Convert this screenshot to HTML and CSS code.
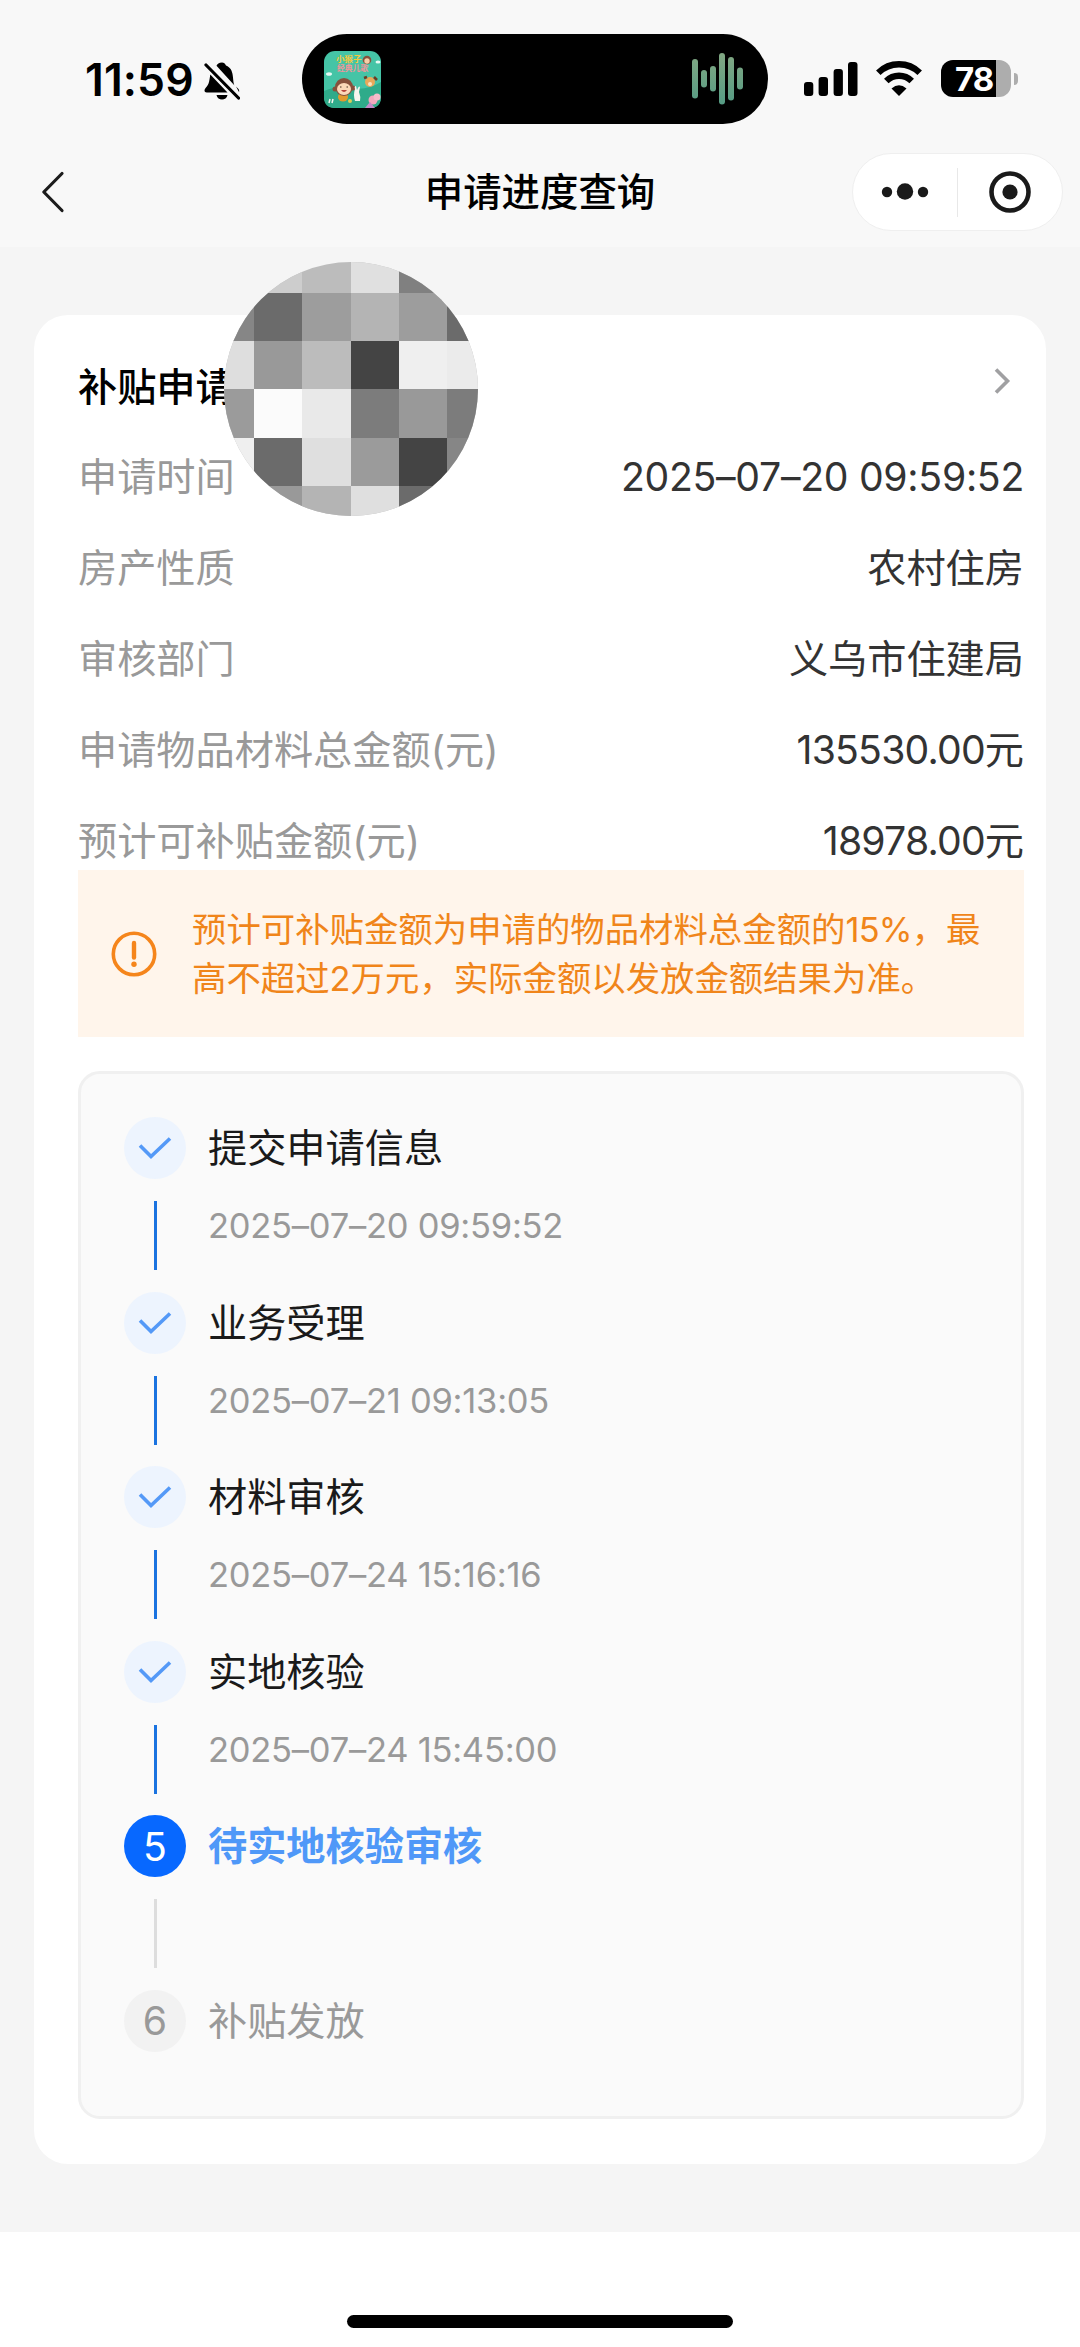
FILE: index.html
```html
<!DOCTYPE html>
<html lang="zh-CN">
<head>
<meta charset="utf-8">
<title>申请进度查询</title>
<link rel="stylesheet" href="styles.css">
</head>
<body>
<header class="top">
  <div class="status">
    <div class="clock">11:59</div>
    <svg class="bell" width="36" height="40" viewBox="0 0 36 40">
      <path d="M18 1.500c-3 0-4.700 1.600-5.500 3.200L30.500 24.500C28 19 31 8 22 4.500 21 2.500 20 1.500 18 1.500zM6.300 13.500L23.500 31.500H2.800C.2 31.500-.2 29 1.600 27 5.500 23.500 5.500 18 6.300 13.500zM12.500 34h11c-1 6-10 6-11 0zM32 25.500l2.500 2.600c.6.800.9 2 .5 3z"/>
      <path d="M2 4L34.500 37" fill="none" stroke="#000" stroke-width="3.200" stroke-linecap="round"/>
    </svg>
    <div class="island">
      <svg class="cover" width="57" height="57" viewBox="0 0 57 57">
        <rect width="57" height="57" rx="11" fill="#45c4a6"/>
        <path d="M0 40q14-6 28-3t29-6v15q0 11-11 11H11Q0 57 0 46z" fill="#2fab8a"/>
        <text x="12" y="11" class="cover-a">小猴子</text>
        <text x="13" y="20" class="cover-b">经典儿歌</text>
        <circle cx="43" cy="9" r="4.300" fill="#87513c"/><circle cx="43" cy="10" r="2.700" fill="#f5cfa8"/>
        <ellipse cx="5" cy="23" rx="3" ry="1.800" fill="#e6f8f3"/><ellipse cx="54" cy="11" rx="2.500" ry="1.600" fill="#e6f8f3"/>
        <ellipse cx="19" cy="46" rx="5" ry="4.500" fill="#e19a2d"/>
        <circle cx="11" cy="38" r="2.500" fill="#87513c"/><circle cx="29" cy="37" r="2.500" fill="#87513c"/>
        <circle cx="20" cy="36" r="9" fill="#87513c"/><ellipse cx="20" cy="38" rx="7" ry="6" fill="#fbd8b8"/>
        <path d="M17 39q3 4 6 0z" fill="#b7453c"/><path d="M16 36h1.500M22.500 36h1.500" stroke="#432" stroke-width="1.200"/>
        <path d="M31 38q-1-3 1-3l1 4q2-5 3-3l-1 5q2 5 1 9h-5q-2-6 0-12z" fill="#f6f4ee"/>
        <circle cx="46" cy="31" r="5" fill="#e9a85a"/><path d="M40 27l3-1M50 26l3 3" stroke="#6b3d24" stroke-width="2.500"/><circle cx="46" cy="33" r="2" fill="#fbe3c0"/>
        <circle cx="49" cy="49" r="4.500" fill="#f3a9bd"/><circle cx="53" cy="46" r="3.500" fill="#f6bccb"/><path d="M41 57l5-6 5 6z" fill="#c58bc9"/>
        <path d="M5 52l1-4M8 52l1-4" stroke="#f6f4ee" stroke-width="1.500"/><circle cx="26" cy="50" r="2" fill="#d9cf55"/>
      </svg>
      <svg class="wave" width="52" height="52" viewBox="0 0 52 52">
        <defs><linearGradient id="w" x1="0" y1="0" x2="0" y2="52" gradientUnits="userSpaceOnUse"><stop offset="0" stop-color="#82a883"/><stop offset="1" stop-color="#559b84"/></linearGradient></defs>
        <g fill="url(#w)"><rect x="0" y="6" width="6" height="39.500" rx="3"/><rect x="9" y="17" width="6" height="17.500" rx="3"/><rect x="18" y="13" width="6" height="25.500" rx="3"/><rect x="27" y="0" width="6" height="51.500" rx="3"/><rect x="36" y="4" width="6" height="43.500" rx="3"/><rect x="45" y="14.500" width="6" height="22" rx="3"/></g>
      </svg>
    </div>
    <svg class="signal" width="54" height="34" viewBox="0 0 54 34"><rect x="0" y="20" width="9.300" height="14" rx="3"/><rect x="14.600" y="15" width="9.400" height="19" rx="3"/><rect x="29.600" y="7" width="9.300" height="27" rx="3"/><rect x="44" y="0" width="9.500" height="34" rx="3"/></svg>
    <svg class="wifi" width="48" height="36" viewBox="0 0 48 36">
      <path d="M3.300 11.800a29.500 29.500 0 0 1 41.400 0M11.300 20a18 18 0 0 1 25.400 0" fill="none" stroke="#000" stroke-width="6.400"/>
      <path d="M16.500 27.500q7.500-6.500 15 0L24 35z"/>
    </svg>
    <div class="battery"><span class="charge">78</span></div>
    <div class="nub"></div>
  </div>
  <nav class="nav">
    <svg class="back" width="24" height="42" viewBox="0 0 24 42"><path d="M21 2.500L2.800 21 21 39.500" fill="none" stroke="#1c1c1c" stroke-width="3.200" stroke-linecap="round" stroke-linejoin="round"/></svg>
    <h1 class="title">申请进度查询</h1>
    <div class="capsule">
      <svg class="dots" width="48" height="18" viewBox="0 0 48 18"><circle cx="6" cy="9" r="5.200"/><circle cx="24" cy="8.500" r="8.200"/><circle cx="42" cy="9" r="5.200"/></svg>
      <i class="rule"></i>
      <svg class="target" width="42" height="42" viewBox="0 0 42 42"><circle cx="21" cy="21" r="18.500" fill="none" stroke="#1a1a1a" stroke-width="4.600"/><circle cx="21" cy="21" r="7.600"/></svg>
    </div>
  </nav>
</header>
<main class="page">
  <section class="card">
    <div class="head">
      <h2 class="name">补贴申请</h2>
      <svg class="more" width="18" height="28" viewBox="0 0 18 28"><path d="M3 2.500L14.500 14 3 25.500" fill="none" stroke="#a0a0a2" stroke-width="3.600"/></svg>
      <svg class="mosaic" width="254" height="254" viewBox="0 0 254 254" shape-rendering="crispEdges">
        <defs><clipPath id="c"><circle cx="127" cy="127" r="127"/></clipPath></defs>
        <g clip-path="url(#c)">
          <rect width="254" height="254" fill="#bcbcbc"/>
          <path fill="#cdcdcd" d="M0 0h78v31H0z"/><path fill="#e0e0e0" d="M127 0h48v31h-48z"/><path fill="#808080" d="M175 0h79v31h-79z"/>
          <path fill="#868686" d="M0 31h30v48H0z"/><path fill="#6b6b6b" d="M30 31h48v48H30z"/><path fill="#9d9d9d" d="M78 31h49v48H78z"/><path fill="#b4b4b4" d="M127 31h48v48h-48z"/><path fill="#9d9d9d" d="M175 31h48v48h-48z"/><path fill="#6b6b6b" d="M223 31h31v48h-31z"/>
          <path fill="#dedede" d="M0 79h30v48H0z"/><path fill="#999" d="M30 79h48v48H30z"/><path fill="#bcbcbc" d="M78 79h49v48H78z"/><path fill="#444" d="M127 79h48v48h-48z"/><path fill="#efefef" d="M175 79h48v48h-48z"/><path fill="#ebebeb" d="M223 79h31v48h-31z"/>
          <path fill="#9b9b9b" d="M0 127h30v49H0z"/><path fill="#fbfbfb" d="M30 127h48v49H30z"/><path fill="#e9e9e9" d="M78 127h49v49H78z"/><path fill="#7c7c7c" d="M127 127h48v49h-48z"/><path fill="#999" d="M175 127h48v49h-48z"/><path fill="#7c7c7c" d="M223 127h31v49h-31z"/>
          <path fill="#efefef" d="M0 176h30v48H0z"/><path fill="#6b6b6b" d="M30 176h48v48H30z"/><path fill="#dfdfdf" d="M78 176h49v48H78z"/><path fill="#9b9b9b" d="M127 176h48v48h-48z"/><path fill="#444" d="M175 176h48v48h-48z"/><path fill="#868686" d="M223 176h31v48h-31z"/>
          <path fill="#999" d="M0 224h78v30H0z"/><path fill="#b4b4b4" d="M78 224h49v30H78z"/><path fill="#dfdfdf" d="M127 224h48v30h-48z"/><path fill="#6b6b6b" d="M175 224h79v30h-79z"/>
        </g>
      </svg>
    </div>
    <dl class="info">
      <div class="row"><dt>申请时间</dt><dd class="date">2025–07–20 09:59:52</dd></div>
      <div class="row"><dt>房产性质</dt><dd>农村住房</dd></div>
      <div class="row"><dt>审核部门</dt><dd>义乌市住建局</dd></div>
      <div class="row"><dt>申请物品材料总金额(元)</dt><dd><span class="num">135530.00</span>元</dd></div>
      <div class="row"><dt>预计可补贴金额(元)</dt><dd><span class="num">18978.00</span>元</dd></div>
    </dl>
    <div class="notice">
      <svg class="warn" width="46" height="46" viewBox="0 0 46 46"><circle cx="23" cy="23" r="20.700" fill="none" stroke="#f5851b" stroke-width="3.600"/><path d="M23 12v14.500" stroke="#f5851b" stroke-width="4.400" stroke-linecap="round"/><circle cx="23" cy="33.200" r="2.700" fill="#f5851b"/></svg>
      <p class="tip">预计可补贴金额为申请的物品材料总金额的<span class="num">15%</span>，最<br>高不超过2万元，实际金额以发放金额结果为准。</p>
    </div>
    <ol class="steps">
      <li class="step"><span class="mark"><svg width="34" height="24" viewBox="0 0 34 24"><path d="M2 9.500l11 11L32 2.500" fill="none" stroke="#5499f7" stroke-width="3.600"/></svg></span><span class="label">提交申请信息</span><i class="line"></i><time class="when">2025–07–20 09:59:52</time></li>
      <li class="step"><span class="mark"><svg width="34" height="24" viewBox="0 0 34 24"><path d="M2 9.500l11 11L32 2.500" fill="none" stroke="#5499f7" stroke-width="3.600"/></svg></span><span class="label">业务受理</span><i class="line"></i><time class="when">2025–07–21 09:13:05</time></li>
      <li class="step"><span class="mark"><svg width="34" height="24" viewBox="0 0 34 24"><path d="M2 9.500l11 11L32 2.500" fill="none" stroke="#5499f7" stroke-width="3.600"/></svg></span><span class="label">材料审核</span><i class="line"></i><time class="when">2025–07–24 15:16:16</time></li>
      <li class="step"><span class="mark"><svg width="34" height="24" viewBox="0 0 34 24"><path d="M2 9.500l11 11L32 2.500" fill="none" stroke="#5499f7" stroke-width="3.600"/></svg></span><span class="label">实地核验</span><i class="line"></i><time class="when">2025–07–24 15:45:00</time></li>
      <li class="step current"><span class="mark">5</span><span class="label">待实地核验审核</span><i class="line"></i></li>
      <li class="step pending"><span class="mark">6</span><span class="label">补贴发放</span></li>
    </ol>
  </section>
</main>
<footer class="home"><div class="bar"></div></footer>
</body>
</html>
```
FILE: styles.css
```css
* { box-sizing: border-box; margin: 0; padding: 0; }
html { background: #fff; }
body {
  width: 1080px;
  height: 2347px;
  display: flex;
  flex-direction: column;
  overflow: hidden;
  font-family: Inter, "Noto Sans CJK SC", sans-serif;
  font-size: 39.2px;
  color: #333;
}
svg { display: block; flex: none; }

.top { height: 247px; flex: none; background: #f8f8f8; }
.status { height: 153px; padding: 34px 0 0 85px; display: flex; align-items: flex-start; }
.clock { width: 119px; height: 90px; line-height: 92px; font-size: 44.5px; font-weight: 600; color: #000; white-space: nowrap; letter-spacing: .1px; }
.bell { margin-top: 27px; }
.island {
  width: 466px; height: 90px; margin-left: 62px; padding: 0 24px 0 22px;
  display: flex; align-items: center; justify-content: space-between;
  border-radius: 45px; background: #000;
}
.cover-a { font-size: 8.5px; font-weight: 700; fill: #f4c93e; }
.cover-b { font-size: 7.8px; font-weight: 700; fill: #f0949a; }
.signal { margin: 28px 0 0 36px; }
.wifi { margin: 27px 0 0 17px; }
.battery {
  width: 70px; height: 37px; margin: 26px 0 0 18px; border-radius: 12px;
  background: linear-gradient(to right, #000 55px, #adadad 55px);
}
.charge { display: block; padding-left: 14px; line-height: 38px; font-size: 33px; font-weight: 700; color: #fff; letter-spacing: -1px; }
.nub { width: 4px; height: 12px; margin: 39px 0 0 3px; border-radius: 0 5px 5px 0; background: #adadad; }

.nav { height: 78px; padding: 0 17px 0 41px; display: grid; grid-template-columns: 211px 1fr 211px; align-items: center; }
.title { margin-left: -24px; text-align: center; font-size: 38.4px; line-height: 78px; font-weight: 500; color: #000; }
.capsule { height: 78px; display: flex; align-items: center; border: 1px solid #efefef; border-radius: 39px; background: #fff; }
.dots { margin-left: 28px; fill: #1a1a1a; }
.rule { width: 1px; height: 49px; margin-left: 28px; background: #e8e8e8; }
.target { margin-left: 31px; fill: #1a1a1a; }

.page { height: 1985px; flex: none; padding: 68px 34px 0; background: #f5f5f5; }
.card { height: 1849px; padding: 0 22px 0 44px; border-radius: 34px; background: #fff; }
.head { position: relative; height: 118px; display: flex; justify-content: space-between; }
.name { padding-top: 44px; font-size: 39.2px; line-height: 56px; font-weight: 500; color: #000; }
.more { margin: 52px 13px 0 0; }
.mosaic { position: absolute; left: 146px; top: -53px; }
.row { height: 91px; display: flex; justify-content: space-between; line-height: 88px; white-space: nowrap; }
.row dt { color: #999; }
.info { height: 437px; }
.date { letter-spacing: -.3px; }
.num { letter-spacing: -.8px; }

.notice { height: 167px; padding-left: 33px; display: flex; align-items: center; background: #fff5eb; color: #f0851a; }
.tip { margin-left: 35px; font-size: 34.4px; line-height: 49px; white-space: nowrap; }

.steps { height: 1048px; margin-top: 34px; padding: 43px 0 0 43px; list-style: none; border: 3px solid #f0f0f0; border-radius: 22px; background: #fafafa; }
.step { height: 174.5px; display: grid; grid-template: 62px 112px / 62px 1fr; column-gap: 22px; }
.mark { display: flex; align-items: center; justify-content: center; border-radius: 50%; background: #edf4fe; }
.label { line-height: 62px; color: #1a1a1a; white-space: nowrap; }
.line { width: 3px; height: 69px; margin: 22px 0 0 30px; background: #1a73e0; }
.when { padding-top: 22px; line-height: 50px; font-size: 34.5px; letter-spacing: -.25px; color: #999; white-space: nowrap; }
.current .mark { background: #0768ff; color: #fff; }
.current .label { color: #4f98f8; font-weight: 700; }
.current .line { background: #ddd; }
.pending .mark { background: #f2f2f2; color: #999; }
.pending .label { color: #999; }

.home { flex: 1; padding-top: 83px; background: #fff; }
.bar { width: 386px; height: 13px; margin: 0 auto; border-radius: 7px; background: #000; }
```
